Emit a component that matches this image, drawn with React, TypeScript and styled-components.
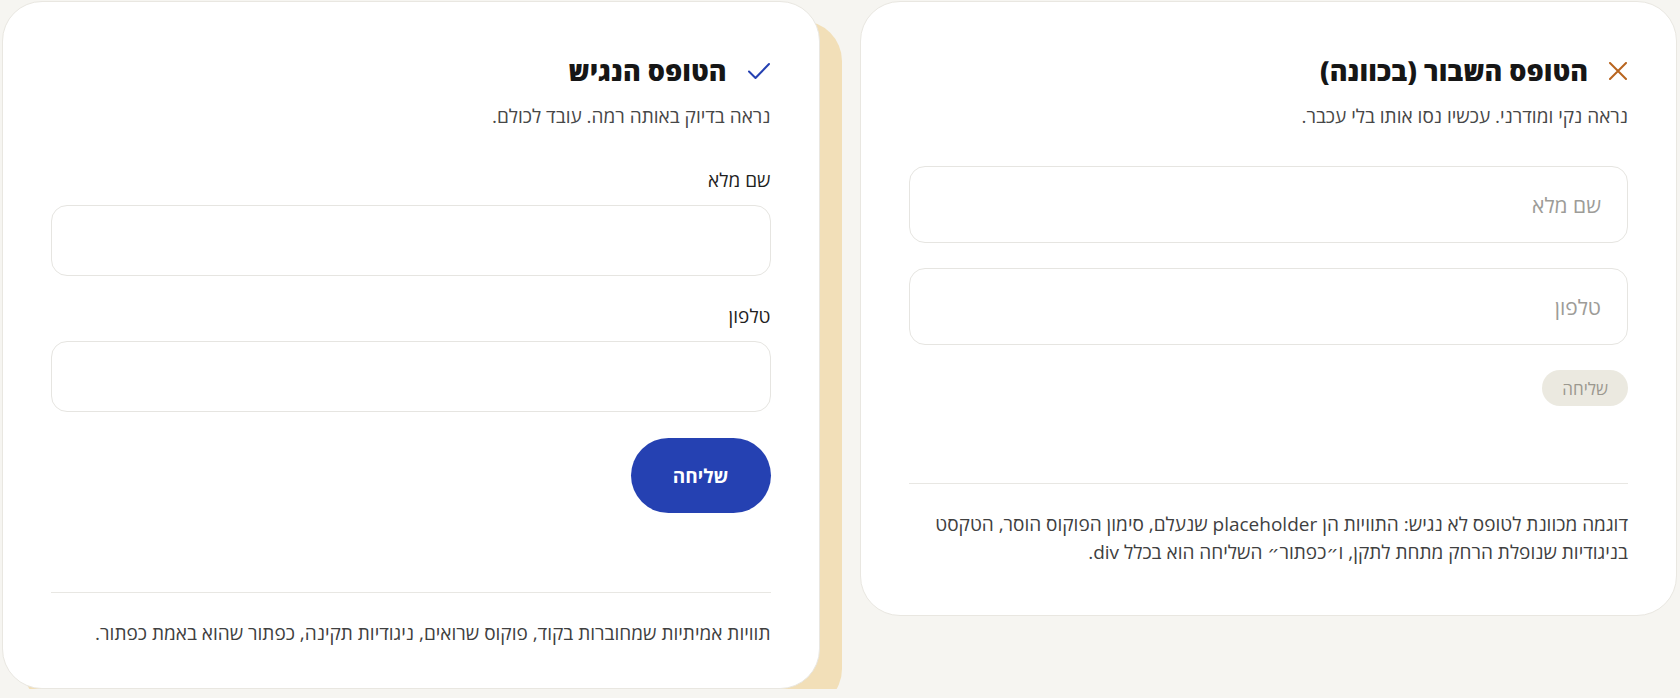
import styled, { createGlobalStyle } from "styled-components";

const GlobalStyle = createGlobalStyle`
  * {
    box-sizing: border-box;
  }
  body {
    margin: 0;
    background: #f6f5f1;
    font-family: "Open Sans", "DejaVu Sans", sans-serif;
    color: #1a1a1a;
  }
`;

const Page = styled.main`
  direction: rtl;
  display: grid;
  grid-template-columns: 1fr 1fr;
  gap: 40px;
  align-items: start;
  padding: 1px 3px 0 2px;
`;

const Card = styled.section<{ $highlight?: boolean }>`
  background: #ffffff;
  border: 1px solid #e9e7e1;
  border-radius: 40px;
  padding: 49px 48px ${(p) => (p.$highlight ? 41 : 49)}px;
  box-shadow: ${(p) => (p.$highlight ? "22px 20px 0 #f2dfb8" : "none")};
`;

const Heading = styled.div`
  display: flex;
  align-items: center;
  gap: 20px;
`;

const Title = styled.h2`
  margin: 0;
  font-size: 27px;
  font-weight: 800;
  line-height: 40px;
  color: #161616;
`;

const Subtitle = styled.p`
  margin: 11px 0 0;
  font-size: 19px;
  line-height: 28px;
  color: #474747;
`;

const Form = styled.form<{ $gap: number; $top: number }>`
  display: flex;
  flex-direction: column;
  align-items: flex-start;
  gap: ${(p) => p.$gap}px;
  margin-top: ${(p) => p.$top}px;
`;

const Field = styled.div`
  width: 100%;
  display: flex;
  flex-direction: column;
  gap: 11px;
`;

const Label = styled.label`
  font-size: 19px;
  line-height: 28px;
  color: #1f1f1f;
`;

const Input = styled.input<{ $tall?: boolean }>`
  width: 100%;
  height: ${(p) => (p.$tall ? 77 : 71)}px;
  border: 1.5px solid #e6e5e1;
  border-radius: 16px;
  background: #fff;
  padding: 0 26px;
  font-family: inherit;
  font-size: 21px;
  color: #1a1a1a;
  direction: rtl;
  outline: none;
  &::placeholder {
    color: #9d9c98;
  }
`;

const SubmitButton = styled.button`
  height: 75px;
  padding: 0 42px;
  border: none;
  border-radius: 38px;
  background: #2541b2;
  color: #fff;
  font-family: inherit;
  font-size: 19px;
  font-weight: 700;
  cursor: pointer;
`;

const FakeButton = styled.div`
  height: 36px;
  padding: 0 20px;
  display: flex;
  align-items: center;
  border-radius: 18px;
  background: #ebe9e0;
  color: #9b988f;
  font-size: 17px;
`;

const Divider = styled.hr<{ $top: number }>`
  width: 100%;
  margin: ${(p) => p.$top}px 0 0;
  border: none;
  border-top: 1.5px solid #e8e7e3;
`;

const Note = styled.p`
  margin: 26px 0 0;
  font-size: 19px;
  line-height: 28px;
  color: #404040;
`;

function CheckIcon() {
  return (
    <svg width="24" height="18" viewBox="0 0 24 18" fill="none">
      <path d="M2 9.5 L8.5 16 L22 2" stroke="#2541b2" strokeWidth="2" strokeLinecap="round" strokeLinejoin="round" />
    </svg>
  );
}

function CrossIcon() {
  return (
    <svg width="20" height="18" viewBox="0 0 20 18" fill="none">
      <path d="M2 1 L18 17 M18 1 L2 17" stroke="#b8651f" strokeWidth="2" strokeLinecap="round" />
    </svg>
  );
}

export default function App() {
  return (
    <>
      <GlobalStyle />
      <Page>
        <Card>
          <Heading>
            <CrossIcon />
            <Title>הטופס השבור (בכוונה)</Title>
          </Heading>
          <Subtitle>נראה נקי ומודרני. עכשיו נסו אותו בלי עכבר.</Subtitle>
          <Form $gap={25} $top={36} onSubmit={(e) => e.preventDefault()}>
            <Input $tall placeholder="שם מלא" />
            <Input $tall placeholder="טלפון" />
            <FakeButton>שליחה</FakeButton>
          </Form>
          <Divider $top={77} />
          <Note>
            דוגמה מכוונת לטופס לא נגיש: התוויות הן placeholder שנעלם, סימון הפוקוס הוסר, הטקסט
            בניגודיות שנופלת הרחק מתחת לתקן, ו״כפתור״ השליחה הוא בכלל div.
          </Note>
        </Card>

        <Card $highlight>
          <Heading>
            <CheckIcon />
            <Title>הטופס הנגיש</Title>
          </Heading>
          <Subtitle>נראה בדיוק באותה רמה. עובד לכולם.</Subtitle>
          <Form $gap={26} $top={36} onSubmit={(e) => e.preventDefault()}>
            <Field>
              <Label htmlFor="name">שם מלא</Label>
              <Input id="name" />
            </Field>
            <Field>
              <Label htmlFor="phone">טלפון</Label>
              <Input id="phone" />
            </Field>
            <SubmitButton type="submit">שליחה</SubmitButton>
          </Form>
          <Divider $top={79} />
          <Note>תוויות אמיתיות שמחוברות בקוד, פוקוס שרואים, ניגודיות תקינה, כפתור שהוא באמת כפתור.</Note>
        </Card>
      </Page>
    </>
  );
}
